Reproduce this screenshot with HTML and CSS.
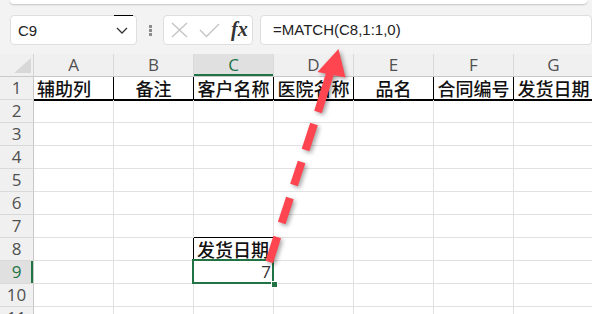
FILE: index.html
```html
<!DOCTYPE html>
<html>
    <head>
        <meta charset="UTF-8">
        <title>MATCH</title>
        <link rel="stylesheet" href="styles.css">
    </head>
    <body>
        <div class="ribbon"></div>
        <div class="fbar">
            <div class="namebox">
                <span>C9</span>
                <svg width="12" height="7" viewBox="0 0 12 7"><path d="M1 1 L6 6 L11 1" fill="none" stroke="#333" stroke-width="1.3"/></svg>
            </div>
            <div class="grip"><i></i><i></i><i></i></div>
            <div class="fxbox">
                <svg class="ico" width="17" height="16" viewBox="0 0 17 16"><path d="M1 1 L16 15 M16 1 L1 15" stroke="#c4c4c4" stroke-width="1.4"/></svg>
                <svg class="ico" width="21" height="15" viewBox="0 0 21 15"><path d="M1 7 L7.5 13.5 L20 1" fill="none" stroke="#c4c4c4" stroke-width="1.4"/></svg>
                <span class="fx">fx</span>
            </div>
            <div class="formula">=MATCH(C8,1:1,0)</div>
        </div>

        <div class="sheet">
            <div class="row">
                <div class="corner"></div>
                <div class="ch">A</div><div class="ch">B</div><div class="ch on">C</div><div class="ch">D</div>
                <div class="ch">E</div><div class="ch">F</div><div class="ch">G</div>
            </div>
            <div class="row">
                <div class="rh">1</div>
                <div class="c t left">辅助列</div><div class="c t">备注</div><div class="c t">客户名称</div><div class="c t">医院名称</div>
                <div class="c t">品名</div><div class="c t">合同编号</div><div class="c t">发货日期</div>
            </div>
            <div class="row">
                <div class="rh">2</div>
                <div class="c"></div><div class="c"></div><div class="c"></div><div class="c"></div><div class="c"></div><div class="c"></div><div class="c"></div>
            </div>
            <div class="row">
                <div class="rh">3</div>
                <div class="c"></div><div class="c"></div><div class="c"></div><div class="c"></div><div class="c"></div><div class="c"></div><div class="c"></div>
            </div>
            <div class="row">
                <div class="rh">4</div>
                <div class="c"></div><div class="c"></div><div class="c"></div><div class="c"></div><div class="c"></div><div class="c"></div><div class="c"></div>
            </div>
            <div class="row">
                <div class="rh">5</div>
                <div class="c"></div><div class="c"></div><div class="c"></div><div class="c"></div><div class="c"></div><div class="c"></div><div class="c"></div>
            </div>
            <div class="row">
                <div class="rh">6</div>
                <div class="c"></div><div class="c"></div><div class="c"></div><div class="c"></div><div class="c"></div><div class="c"></div><div class="c"></div>
            </div>
            <div class="row">
                <div class="rh">7</div>
                <div class="c"></div><div class="c"></div><div class="c above"></div><div class="c"></div><div class="c"></div><div class="c"></div><div class="c"></div>
            </div>
            <div class="row">
                <div class="rh">8</div>
                <div class="c"></div><div class="c boxl"></div><div class="c t left boxr">发货日期</div><div class="c"></div><div class="c"></div><div class="c"></div><div class="c"></div>
            </div>
            <div class="row">
                <div class="rh on">9</div>
                <div class="c"></div><div class="c"></div>
                <div class="c num active">7<div class="sel"></div><div class="handle"></div></div>
                <div class="c"></div><div class="c"></div><div class="c"></div><div class="c"></div>
            </div>
            <div class="row">
                <div class="rh">10</div>
                <div class="c"></div><div class="c"></div><div class="c"></div><div class="c"></div><div class="c"></div><div class="c"></div><div class="c"></div>
            </div>
            <div class="row">
                <div class="rh">11</div>
                <div class="c"></div><div class="c"></div><div class="c"></div><div class="c"></div><div class="c"></div><div class="c"></div><div class="c"></div>
            </div>
        </div>

        <!-- red dashed arrow pointing at the formula -->
        <svg class="arrow" width="592" height="314" viewBox="0 0 592 314">
            <g stroke="#ff4550" stroke-width="8">
                <line x1="269.3" y1="262" x2="277.2" y2="237"/>
                <line x1="281.7" y1="223" x2="289.9" y2="198"/>
                <line x1="294" y1="185" x2="301.6" y2="162"/>
                <line x1="305.5" y1="150" x2="314" y2="124"/>
                <line x1="318" y1="112" x2="330.5" y2="72"/>
            </g>
            <polygon points="338.5,49 317.5,72 345.5,77.5" fill="#ff4550"/>
        </svg>
    </body>
</html>
```

FILE: styles.css
```css
body{
    margin: 0;
    width: 592px;
    height: 314px;
    overflow: hidden;
    position: relative;
    background: #f3f3f3;
    font-family: "Open Sans", "Liberation Sans", sans-serif;
}
.ribbon{
    height: 4px;
    margin: 0 5px 0 10px;
    background: #fff;
    border-radius: 0 0 8px 8px;
    box-shadow: 0 1px 2px rgba(0,0,0,.2);
}

/* formula bar */
.fbar{
    display: flex;
    align-items: center;
    height: 30px;
    margin-top: 11px;
    padding-left: 10px;
}
.namebox, .fxbox, .formula{
    box-sizing: border-box;
    height: 30px;
    background: #fff;
    border: 1px solid #dedede;
    border-radius: 4px;
}
.namebox{
    position: relative;
    width: 127px;
    display: flex;
    align-items: center;
    justify-content: space-between;
    padding: 0 8px 0 7px;
    font-family: "Liberation Sans", sans-serif;
    font-size: 15px;
    color: #222;
}
.namebox::after{
    content: "";
    position: absolute;
    top: -1px;
    left: 103px;
    width: 19px;
    height: 1px;
    background: #000;
}
.grip{
    width: 26px;
    display: flex;
    flex-direction: column;
    align-items: center;
    gap: 1px;
}
.grip i{
    width: 3px;
    height: 3px;
    background: #8c8c8c;
}
.fxbox{
    width: 90px;
    display: flex;
    align-items: center;
    padding-left: 7px;
}
.fxbox .ico{
    margin-right: 11px;
}
.fx{
    font-family: "Liberation Serif", serif;
    font-style: italic;
    font-weight: bold;
    font-size: 20px;
    color: #333;
    line-height: 20px;
    margin-top: -2px;
}
.formula{
    width: 332px;
    margin-left: 7px;
    padding-left: 12px;
    font-family: "Liberation Sans", sans-serif;
    font-size: 15px;
    line-height: 28px;
    color: #222;
}

/* sheet */
.sheet{
    margin-top: 9px;
    background: #fff;
}
.row{
    display: flex;
    height: 23px;
}
.row > div{
    flex: none;
    box-sizing: border-box;
    height: 23px;
    line-height: 22px;
    white-space: nowrap;
}
.corner{
    width: 34px;
    background: #f0f0f0;
    border-right: 1px solid #d4d4d4;
    border-bottom: 1px solid #c8c8c8;
    position: relative;
}
.corner::after{
    content: "";
    position: absolute;
    right: 2px;
    bottom: 3px;
    border-style: solid;
    border-width: 0 0 15px 17px;
    border-color: transparent transparent #d8d8d8 transparent;
}
.ch{
    width: 80px;
    background: #f0f0f0;
    border-right: 1px solid #d9d9d9;
    border-bottom: 1px solid #c8c8c8;
    text-align: center;
    font-size: 17px;
    color: #505050;
}
.ch.on{
    background: #e0e0e0;
    color: #217346;
    box-shadow: inset 0 -2px 0 #217346;
}
.rh{
    width: 34px;
    background: #f0f0f0;
    border-right: 1px solid #c8c8c8;
    border-bottom: 1px solid #d9d9d9;
    text-align: center;
    font-size: 17px;
    color: #505050;
}
.rh.on{
    background: #e0e0e0;
    color: #217346;
    box-shadow: inset -2px 0 0 #217346;
}
.c{
    width: 80px;
    border-right: 1px solid #e1e1e1;
    border-bottom: 1px solid #e1e1e1;
}
.c.t{
    font-family: "Noto Sans CJK SC", sans-serif;
    font-weight: 500;
    font-size: 18px;
    color: #111;
    text-align: center;
}
.row:nth-child(2) .c{
    border-right-color: #000;
    border-bottom-color: #000;
    box-shadow: 0 1px 0 #000;
}
.c.left{
    text-align: left;
    padding-left: 3px;
}
.c.above{
    border-bottom-color: #000;
}
.c.boxl, .c.boxr{
    border-right-color: #000;
}
.c.num{
    text-align: right;
    padding-right: 2px;
    font-size: 17px;
    color: #333;
}
.active{
    position: relative;
}
.sel{
    position: absolute;
    left: -2px;
    top: -2px;
    width: 82px;
    height: 25px;
    box-sizing: border-box;
    border: 2px solid #217346;
}
.handle{
    position: absolute;
    left: 77px;
    top: 20px;
    width: 5px;
    height: 5px;
    background: #217346;
    border: 1px solid #fff;
}

.arrow{
    position: absolute;
    top: 0;
    left: 0;
    pointer-events: none;
    filter: drop-shadow(2px 2px 2px rgba(0,0,0,.35));
}
```
